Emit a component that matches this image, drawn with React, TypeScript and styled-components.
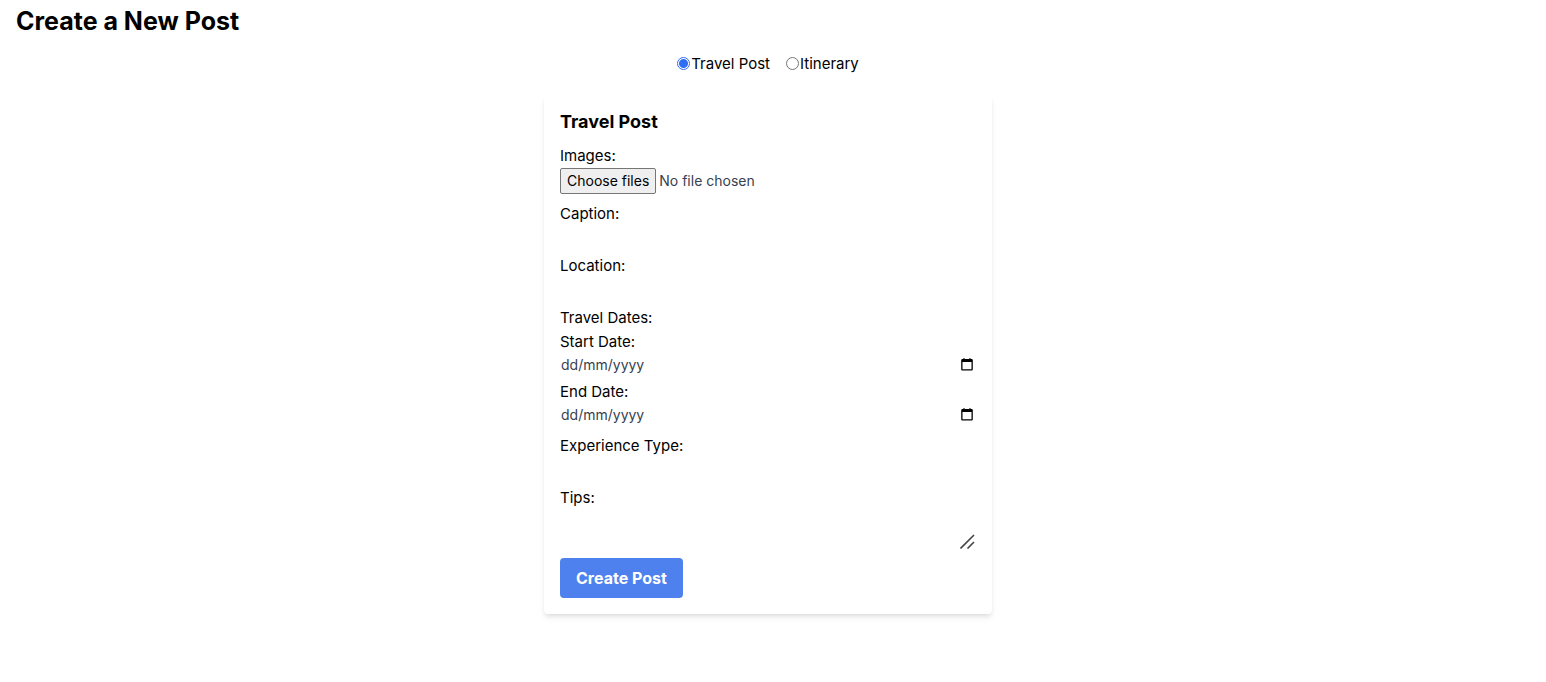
import React, { useState } from "react";
import styled, { createGlobalStyle } from "styled-components";

const GlobalStyle = createGlobalStyle`
  *, *::before, *::after { box-sizing: border-box; }
  body {
    margin: 0;
    background: #fff;
    color: #000;
    font-family: Inter, "Liberation Sans", sans-serif;
    font-size: 15px;
    line-height: 24px;
  }
  button, input, select, textarea { font: inherit; color: inherit; }
`;

const Page = styled.main`
  padding: 8px 26px 16px 16px;
`;

const Title = styled.h1`
  margin: 0 0 18px;
  font-size: 25px;
  line-height: 26px;
  font-weight: 700;
`;

const TypePicker = styled.div`
  display: flex;
  justify-content: center;
  gap: 16px;
  margin-bottom: 20px;
`;

const RadioLabel = styled.label`
  display: flex;
  align-items: center;
  gap: 1px;
`;

const Radio = styled.input`
  width: 13px;
  height: 13px;
  margin: 0 0 2px;
  appearance: none;
  border: 1px solid #767676;
  border-radius: 50%;
  background: #fff;

  &:checked {
    border-color: #2f6df6;
    background: radial-gradient(circle, #2f6df6 0 4px, #fff 5px);
  }
`;

const Card = styled.form`
  max-width: 448px;
  margin: 0 auto;
  padding: 16px;
  border-radius: 4px;
  background: #fff;
  box-shadow: 0 4px 6px -1px rgba(0, 0, 0, 0.1), 0 2px 4px -1px rgba(0, 0, 0, 0.06);
`;

const CardTitle = styled.h2`
  margin: 0 0 12px;
  font-size: 18px;
  line-height: 20px;
  font-weight: 700;
`;

const Field = styled.div<{ $gap?: number }>`
  margin-bottom: ${({ $gap = 8 }) => $gap}px;
`;

const Label = styled.label`
  display: block;
`;

const GroupLabel = styled.div``;

const TextInput = styled.input`
  display: block;
  width: 100%;
  height: 20px;
  padding: 0;
  border: 0;
  background: transparent;
  color: #374151;
  font-size: 14px;

  &::placeholder {
    color: #374151;
    opacity: 1;
  }
`;

const Select = styled.select`
  display: block;
  width: 100%;
  height: 20px;
  padding: 0;
  border: 0;
  appearance: none;
  background: transparent;
  color: #374151;
  font-size: 14px;
`;

const FileRow = styled.div`
  display: flex;
  align-items: center;
  gap: 3px;
  height: 26px;
  color: #374151;
  font-size: 14px;
`;

const FileButton = styled.label`
  padding: 0 6px;
  border: 1px solid #767676;
  border-radius: 2px;
  background: #efefef;
  color: #000;
`;

const HiddenFile = styled.input`
  position: absolute;
  width: 1px;
  height: 1px;
  opacity: 0;
`;

const DateRow = styled.div`
  display: flex;
  align-items: center;
  height: 22px;
  padding: 0 1px;
`;

const CalendarButton = styled.button`
  display: flex;
  padding: 0 2px 2px 0;
  border: 0;
  background: transparent;
`;

const TextAreaWrap = styled.div`
  position: relative;
  height: 40px;
`;

const TextArea = styled.textarea`
  display: block;
  width: 100%;
  height: 100%;
  padding: 0;
  border: 0;
  resize: none;
  background: transparent;
  color: #374151;
  font-size: 14px;
`;

const Grip = styled.svg`
  position: absolute;
  right: 1px;
  bottom: 1px;
  pointer-events: none;
`;

const SubmitButton = styled.button`
  display: block;
  height: 40px;
  padding: 0 16px;
  border: 0;
  border-radius: 4px;
  background: #4f81ee;
  color: #fff;
  font-size: 16px;
  font-weight: 700;
`;

function DateField({ id, label, gap }: { id: string; label: string; gap: number }) {
  return (
    <Field $gap={gap}>
      <Label htmlFor={id}>{label}</Label>
      <DateRow>
        <TextInput id={id} type="text" placeholder="dd/mm/yyyy" inputMode="numeric" />
        <CalendarButton type="button" aria-label={`Choose ${label}`}>
          <svg width="12" height="13" viewBox="0 0 12 13" aria-hidden="true">
            <path d="M2.5 0h1v1h5V0h1v1H11l.8.8v9.9l-.8.8H1l-.8-.8V1.8L1 1h1.5zM1.5 4v7.2h9V4z" fill="#000" fillRule="evenodd" />
          </svg>
        </CalendarButton>
      </DateRow>
    </Field>
  );
}

export default function App() {
  const [kind, setKind] = useState("travel");

  return (
    <>
      <GlobalStyle />
      <Page>
        <Title>Create a New Post</Title>
        <TypePicker>
          <RadioLabel>
            <Radio type="radio" name="kind" checked={kind === "travel"} onChange={() => setKind("travel")} />
            Travel Post
          </RadioLabel>
          <RadioLabel>
            <Radio type="radio" name="kind" checked={kind === "itinerary"} onChange={() => setKind("itinerary")} />
            Itinerary
          </RadioLabel>
        </TypePicker>
        <Card onSubmit={(e) => e.preventDefault()}>
          <CardTitle>Travel Post</CardTitle>
          <Field>
            <Label htmlFor="images">Images:</Label>
            <FileRow>
              <HiddenFile id="images" type="file" multiple />
              <FileButton htmlFor="images">Choose files</FileButton>
              <span>No file chosen</span>
            </FileRow>
          </Field>
          <Field>
            <Label htmlFor="caption">Caption:</Label>
            <TextInput id="caption" type="text" />
          </Field>
          <Field>
            <Label htmlFor="location">Location:</Label>
            <TextInput id="location" type="text" />
          </Field>
          <GroupLabel>Travel Dates:</GroupLabel>
          <DateField id="start" label="Start Date:" gap={4} />
          <DateField id="end" label="End Date:" gap={8} />
          <Field>
            <Label htmlFor="experience">Experience Type:</Label>
            <Select id="experience" defaultValue="">
              <option value="" />
            </Select>
          </Field>
          <Field>
            <Label htmlFor="tips">Tips:</Label>
            <TextAreaWrap>
              <TextArea id="tips" />
              <Grip width="15" height="15" viewBox="0 0 15 15" aria-hidden="true">
                <path d="M.5 14.5L14 1M7.5 14.5L14 8" stroke="#444" strokeWidth="1.6" fill="none" />
              </Grip>
            </TextAreaWrap>
          </Field>
          <SubmitButton type="submit">Create Post</SubmitButton>
        </Card>
      </Page>
    </>
  );
}
